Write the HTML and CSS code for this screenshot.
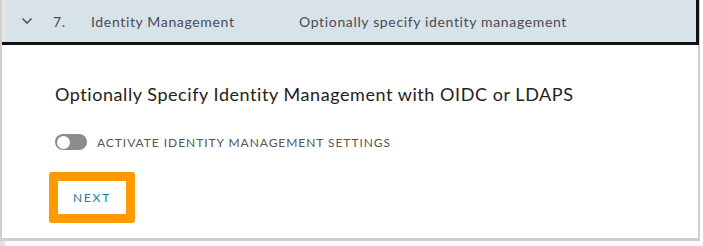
FILE: index.html
```html
<!DOCTYPE html>
<html lang="en">
<head>
  <meta charset="UTF-8">
  <title>Identity Management</title>
  <link rel="stylesheet" href="styles.css">
</head>
<body>
  <div class="step">
    <div class="step-header">
      <span class="chevron">
        <svg width="12" height="8" viewBox="0 0 12 8"><path d="M1.5 1.5 L6 6 L10.5 1.5" fill="none" stroke="#555" stroke-width="1.6"/></svg>
      </span>
      <span class="num">7.</span>
      <span class="title">Identity Management</span>
      <span class="desc">Optionally specify identity management</span>
    </div>
    <div class="step-body">
      <h3>Optionally Specify Identity Management with OIDC or LDAPS</h3>
      <label class="toggle">
        <span class="switch"><span class="knob"></span></span>
        <span class="toggle-label">ACTIVATE IDENTITY MANAGEMENT SETTINGS</span>
      </label>
      <div class="highlight">
        <button class="btn">NEXT</button>
      </div>
    </div>
  </div>
  <div class="next-step"><span class="stub"></span></div>
</body>
</html>
```

FILE: styles.css
```css
body {
  margin: 0;
  background: #fff;
  font-family: Lato, "Noto Sans", sans-serif;
  width: 703px;
  height: 246px;
  overflow: hidden;
}

.step {
  width: 696px;
  border-left: 2px solid #cfcfcf;
  border-right: 2px solid #cfcfcf;
  border-bottom: 3px solid #cfcfcf;
  height: 238px;
  box-sizing: content-box;
}

.step-header {
  margin-right: -1px;
  height: 42px;
  background: #d7e2e9;
  border-bottom: 3px solid #111;
  border-right: 3px solid #111;
  box-shadow: inset 4px 0 0 #e4e4e4;
  display: flex;
  align-items: center;
  color: #4b4b55;
  font-size: 14px;
  letter-spacing: 0.65px;
}

.chevron { width: 12px; margin-left: 19px; display: flex; }
.num { margin-left: 20px; width: 38px; }
.title { width: 208px; }

.step-body {
  padding: 38px 0 0 53px;
}

.step-body h3 {
  margin: 0;
  font-weight: 400;
  font-size: 18px;
  color: #222;
  letter-spacing: 0.56px;
}

.toggle {
  display: flex;
  align-items: center;
  margin-top: 29px;
}

.switch {
  width: 32px;
  height: 16px;
  border-radius: 8px;
  background: #8c8c8c;
  display: flex;
  align-items: center;
  padding-left: 2px;
  box-sizing: border-box;
}

.knob {
  width: 13px;
  height: 13px;
  border-radius: 50%;
  background: #fff;
}

.toggle-label {
  margin-left: 10px;
  font-size: 12px;
  color: #565656;
  letter-spacing: 0.95px;
}

.highlight {
  display: inline-block;
  margin: 22px 0 0 -6px;
  border: 9px solid #ff9900;
  border-radius: 3px;
}

.btn {
  display: block;
  width: 68px;
  height: 33px;
  border: none;
  background: #fff;
  color: #1a7bb0;
  font-family: inherit;
  font-size: 12px;
  letter-spacing: 1.8px;
  padding: 0;
}

.next-step {
  background: #fafafa;
  height: 5px;
}

.stub {
  display: block;
  width: 5px;
  height: 5px;
  background: #e4e4e4;
}
```
